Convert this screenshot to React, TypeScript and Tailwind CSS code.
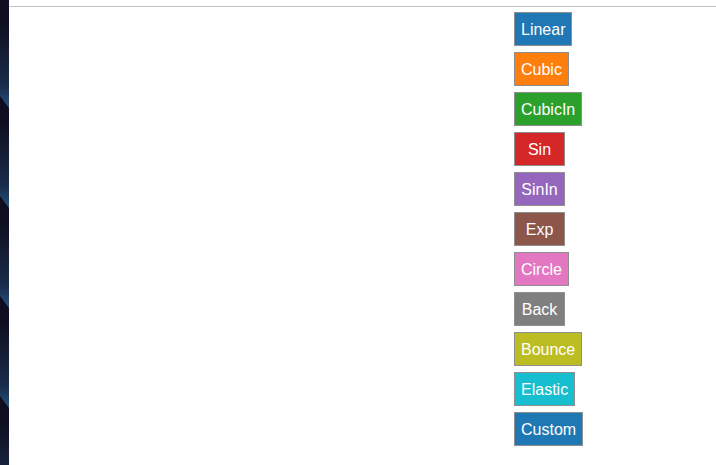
import React from "react";

const easings = [
  { name: "Linear", color: "#1f77b4" },
  { name: "Cubic", color: "#ff7f0e" },
  { name: "CubicIn", color: "#2ca02c" },
  { name: "Sin", color: "#d62728" },
  { name: "SinIn", color: "#9467bd" },
  { name: "Exp", color: "#8c564b" },
  { name: "Circle", color: "#e377c2" },
  { name: "Back", color: "#7f7f7f" },
  { name: "Bounce", color: "#bcbd22" },
  { name: "Elastic", color: "#17becf" },
  { name: "Custom", color: "#1f77b4" },
];

// decorative dark strip on the left edge
const SideStrip = () => (
  <svg width="9" height="465" className="shrink-0 block">
    <defs>
      <linearGradient id="streak" x1="0" y1="0" x2="0" y2="1">
        <stop offset="0" stopColor="#0f0d1f" />
        <stop offset="0.75" stopColor="#1b3050" />
        <stop offset="1" stopColor="#2a5a8c" />
      </linearGradient>
    </defs>
    <rect width="9" height="465" fill="#0f0d1f" />
    {[0, 100, 200, 300, 400].map((y) => (
      <polygon
        key={y}
        points={`0,${y + 20} 9,${y + 20} 9,${y + 108} 0,${y + 96}`}
        fill="url(#streak)"
        opacity="0.9"
      />
    ))}
  </svg>
);

const App = () => {
  return (
    <div className="flex w-[716px] h-[465px] bg-white overflow-hidden font-['Liberation_Sans',Arial,sans-serif]">
      <SideStrip />
      <div className="flex-1 flex flex-col">
        <div className="mt-[6px] h-px bg-[#c4c4c4]" />
        <div className="flex flex-col items-start gap-[6px] pl-[505px] pt-[5px]">
          {easings.map((e) => (
            <button
              key={e.name}
              className="h-[34px] min-w-[51px] px-[6px] pt-[2px] border border-[#8f8f8f] text-white text-[16px] leading-none flex items-center justify-center"
              style={{ backgroundColor: e.color }}
            >
              {e.name}
            </button>
          ))}
        </div>
      </div>
    </div>
  );
};

export default App;
